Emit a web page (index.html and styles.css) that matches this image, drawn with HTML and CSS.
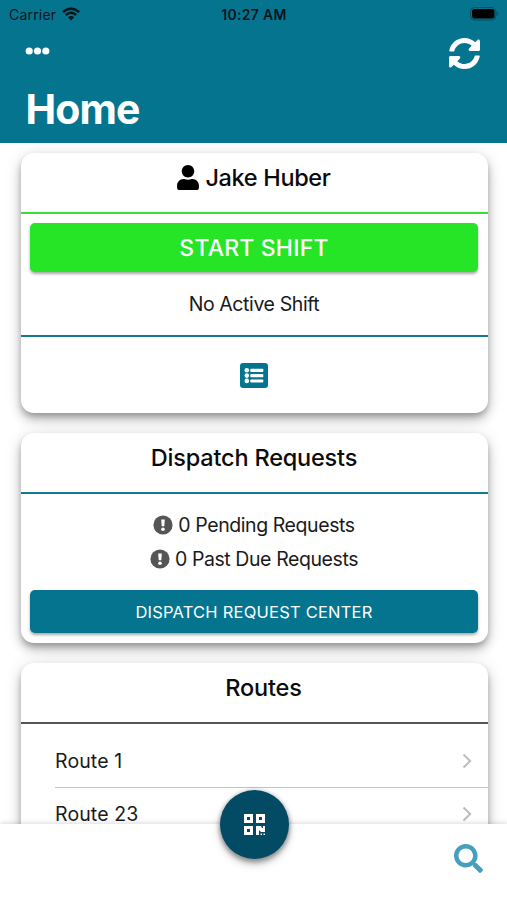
FILE: index.html
```html
<!DOCTYPE html>
<html lang="en">
<head>
<meta charset="utf-8">
<title>Home</title>
<link rel="stylesheet" href="styles.css">
</head>
<body>
<div class="app">
  <header class="header">
    <div class="status">
      <span class="carrier"><span class="carrier-name">Carrier</span>
        <svg class="wifi" viewBox="0 0 18 14" fill="none" stroke="#06141a" stroke-width="2.5"><path d="M1 5.1C5.5.5 12.500.5 17 5.100M3.900 8C6.800 5.100 11.200 5.100 14.100 8"/><path d="M9 13.500L5.900 10.300Q9 7.700 12.100 10.300Z" fill="#06141a" stroke="none"/></svg>
      </span>
      <span class="time">10:27 AM</span>
      <span class="battery-wrap"><svg class="battery" viewBox="0 0 29 14"><rect x=".5" y=".5" width="25.500" height="12.500" rx="4" fill="none" stroke="#064d5e"/><rect x="2" y="2" width="22.500" height="9.500" rx="2.500" fill="#000"/><path d="M27.300 4.500q2 2.200 0 4.500z" fill="#064d5e"/></svg></span>
    </div>
    <div class="toolbar">
      <svg class="more" viewBox="0 0 24 8" fill="#fff"><circle cx="3.700" cy="4" r="3.600"/><circle cx="12" cy="4" r="3.600"/><circle cx="20.300" cy="4" r="3.600"/></svg>
      <svg class="sync" viewBox="8 8 496 496" fill="#fff"><path d="M370.720 133.280C339.458 104.008 298.888 87.962 255.848 88c-77.458.068-144.328 53.178-162.791 126.850-1.344 5.363-6.122 9.150-11.651 9.150H24.103c-7.498 0-13.194-6.807-11.807-14.176C33.933 94.924 134.813 8 256 8c66.448 0 126.791 26.136 171.315 68.685L463.030 40.970C478.149 25.851 504 36.559 504 57.941V192c0 13.255-10.745 24-24 24H345.941c-21.382 0-32.090-25.851-16.971-40.971l41.750-41.749zM32 296h134.059c21.382 0 32.090 25.851 16.971 40.971l-41.750 41.750c31.262 29.273 71.835 45.319 114.876 45.280 77.418-.07 144.315-53.144 162.787-126.849 1.344-5.363 6.122-9.150 11.651-9.150h57.304c7.498 0 13.194 6.807 11.807 14.176C478.067 417.076 377.187 504 256 504c-66.448 0-126.791-26.136-171.315-68.685L48.970 471.030C33.851 486.149 8 475.441 8 454.059V320c0-13.255 10.745-24 24-24z"/></svg>
    </div>
    <h1 class="title">Home</h1>
  </header>

  <main class="content">
    <section class="card shift">
      <h2 class="card-title green">
        <svg class="user" viewBox="0 0 448 512"><path d="M224 256c70.700 0 128-57.300 128-128S294.700 0 224 0 96 57.300 96 128s57.300 128 128 128zm89.600 32h-16.700c-22.200 10.200-46.900 16-72.900 16s-50.600-5.800-72.900-16h-16.700C60.200 288 0 348.200 0 422.400V464c0 26.500 21.500 48 48 48h352c26.500 0 48-21.500 48-48v-41.600c0-74.200-60.200-134.400-134.400-134.400z"/></svg>
        <span class="name">Jake Huber</span>
      </h2>
      <button class="button start"><span class="start-label">START SHIFT</span></button>
      <p class="shift-state"><span>No Active Shift</span></p>
      <div class="shift-actions">
        <svg class="list" viewBox="0 0 28 25"><rect width="28" height="25" rx="3" fill="#05758f"/><g fill="#fff"><circle cx="6.800" cy="7.300" r="2.300"/><circle cx="6.800" cy="12.600" r="2.300"/><circle cx="6.800" cy="17.900" r="2.300"/><rect x="10.300" y="5.800" width="13" height="3.200" rx=".8"/><rect x="10.300" y="11.100" width="13" height="3.200" rx=".8"/><rect x="10.300" y="16.400" width="13" height="3.200" rx=".8"/></g></svg>
      </div>
    </section>

    <section class="card dispatch">
      <h2 class="card-title teal"><span class="dispatch-title">Dispatch Requests</span></h2>
      <div class="requests">
        <p class="request"><svg class="alert" viewBox="0 0 20 20"><circle cx="10" cy="10" r="9.600" fill="#555"/><path d="M8.200 4.500h3.600l-.5 6.700H8.700z" fill="#fff"/><circle cx="10" cy="14.200" r="1.800" fill="#fff"/></svg><span class="pending">0 Pending Requests</span></p>
        <p class="request"><svg class="alert" viewBox="0 0 20 20"><circle cx="10" cy="10" r="9.600" fill="#555"/><path d="M8.200 4.500h3.600l-.5 6.700H8.700z" fill="#fff"/><circle cx="10" cy="14.200" r="1.800" fill="#fff"/></svg><span class="past">0 Past Due Requests</span></p>
      </div>
      <button class="button center"><span class="center-label">DISPATCH REQUEST CENTER</span></button>
    </section>

    <section class="card routes">
      <h2 class="card-title gray"><span class="routes-title">Routes</span></h2>
      <div class="route-list">
        <div class="route"><span>Route 1</span><svg class="chevron" viewBox="0 0 10 16"><path d="M1.500 1.500L8.200 8l-6.700 6.500"/></svg></div>
        <div class="route"><span>Route 23</span><svg class="chevron" viewBox="0 0 10 16"><path d="M1.500 1.500L8.200 8l-6.700 6.500"/></svg></div>
      </div>
    </section>
  </main>

  <footer class="footer">
    <button class="fab" aria-label="Scan code">
      <svg class="qr" viewBox="0 0 21 21" fill="#fff"><path fill-rule="evenodd" d="M0 0h9v9H0zM3 3v3h3V3zM12 0h9v9h-9zM15 3v3h3V3zM0 12h9v9H0zM3 15v3h3v-3z"/><path d="M12 12h5l1 2h1v-2h2v6h-4l-2-2v5h-3zM16.500 19.500H18V21h-1.500zM19.500 19.500H21V21h-1.500z"/></svg>
    </button>
    <svg class="search" viewBox="0 0 512 512" fill="#459fbd"><path d="M505 442.700L405.300 343c-4.500-4.500-10.600-7-17-7H372c27.600-35.300 44-79.700 44-128C416 93.100 322.900 0 208 0S0 93.100 0 208s93.100 208 208 208c48.300 0 92.700-16.400 128-44v16.300c0 6.400 2.500 12.500 7 17l99.700 99.700c9.400 9.400 24.600 9.400 33.900 0l28.300-28.300c9.400-9.400 9.400-24.600.1-34zM208 336c-70.700 0-128-57.200-128-128 0-70.700 57.200-128 128-128 70.700 0 128 57.200 128 128 0 70.700-57.200 128-128 128z"/></svg>
  </footer>
</div>
</body>
</html>
```
FILE: styles.css
```css
* { box-sizing: border-box; }
body { margin: 0; font-family: Inter, "Liberation Sans", sans-serif; color: #1a1a1a; background: #fff; }
h1, h2, p { margin: 0; }
svg { display: block; flex: none; }
button { border: 0; padding: 0; font: inherit; color: #fff; }
.app { height: 900px; overflow: hidden; display: flex; flex-direction: column; }

.header { height: 142.5px; flex: none; background: #05758f; color: #fff; }
.status { height: 28px; padding: 0 8px 0 9px; display: grid; grid-template-columns: 1fr auto 1fr; align-items: center; color: #06141a; font-size: 14px; }
.carrier { display: flex; align-items: center; gap: 6px; }
.carrier-name { letter-spacing: .2px; }
.wifi { width: 18px; height: 14px; }
.time { font-weight: 600; letter-spacing: .3px; }
.battery-wrap { display: flex; justify-content: flex-end; }
.battery { width: 29px; height: 14px; }
.toolbar { height: 50px; padding: 0 27px 0 25px; display: flex; align-items: center; justify-content: space-between; }
.more { width: 25px; height: 8px; margin-bottom: 5px; }
.sync { width: 31px; height: 31px; }
.title { margin-left: 25.5px; font-size: 41px; line-height: 62px; font-weight: 700; letter-spacing: -.9px; }

.content { flex: 1; min-height: 0; overflow: hidden; padding: 10px 19.5px 0 20.5px; display: flex; flex-direction: column; gap: 19.5px; }
.card { flex: none; border-radius: 13px; background: #fff; box-shadow: 0 4px 6px -1px rgba(0,0,0,.25), 0 7px 12px rgba(0,0,0,.2), 0 1px 18px rgba(0,0,0,.1); }
.card-title { height: 61px; padding-bottom: 10px; display: flex; align-items: center; justify-content: center; gap: 6px; border-bottom: 2.5px solid; font-size: 23.5px; font-weight: 500; letter-spacing: -.35px; }
.card-title span { color: #0b0b0b; }
.card-title .dispatch-title { letter-spacing: -.2px; }
.card-title .routes-title { margin-left: 19px; letter-spacing: -.2px; }
.green { border-color: #3adc3a; }
.teal { border-color: #177990; }
.gray { border-color: #555; }
.user { width: 22px; height: 25px; }
.button { display: flex; align-items: center; justify-content: center; margin: 0 9.5px; width: calc(100% - 19px); border-radius: 5px; box-shadow: 0 2px 3px rgba(0,0,0,.35); }

.shift { height: 260.5px; }
.start { height: 49px; margin-top: 9.5px; background: #26e426; font-size: 23px; font-weight: 500; letter-spacing: .2px; }
.shift-state { height: 65px; display: flex; align-items: center; justify-content: center; border-bottom: 2.5px solid #177990; font-size: 19.5px; letter-spacing: -.4px; }
.shift-actions { height: 76px; display: flex; align-items: center; justify-content: center; }
.list { width: 28px; height: 25px; }

.dispatch { height: 210.5px; }
.requests { height: 96px; padding-top: 15px; }
.request { height: 33.5px; display: flex; align-items: center; justify-content: center; gap: 5px; font-size: 19.5px; letter-spacing: -.42px; }
.alert { width: 20px; height: 20px; }
.center { height: 43.5px; background: #05758f; font-size: 16.5px; letter-spacing: .22px; }
.center-label { padding-top: 1px; }

.routes { height: 260px; }
.route-list { padding: 11px 0 0 34.5px; }
.route { height: 53.5px; padding-right: 16px; display: flex; align-items: center; justify-content: space-between; border-bottom: 1px solid #c4c4c4; font-size: 19.5px; letter-spacing: .12px; }
.chevron { width: 10px; height: 16px; fill: none; stroke: #bdbdbd; stroke-width: 2; }

.footer { height: 76px; flex: none; position: relative; padding: 0 24px 7px; display: flex; align-items: center; justify-content: flex-end; background: #fff; box-shadow: 0 -1px 5px rgba(0,0,0,.15); }
.fab { position: absolute; left: 219.5px; top: -34px; width: 69px; height: 69px; border-radius: 50%; display: flex; align-items: center; justify-content: center; background: #034b64; box-shadow: 0 3px 4px 1px rgba(0,0,0,.25), 0 5px 10px rgba(0,0,0,.2), 0 0 3px 2px rgba(0,0,0,.07); }
.qr { width: 21px; height: 21px; }
.search { width: 29px; height: 29px; }
```
